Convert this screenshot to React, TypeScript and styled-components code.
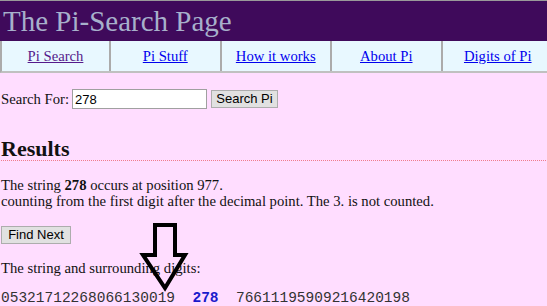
import styled, { createGlobalStyle } from "styled-components";

const GlobalStyle = createGlobalStyle`
  html, body {
    margin: 0;
    padding: 0;
    background: #ffddff;
  }
  body {
    font-family: "Liberation Serif", "Times New Roman", serif;
    font-size: 14.67px;
    color: #111;
  }
`;

const NAV_LINKS = [
  { label: "Pi Search", visited: true },
  { label: "Pi Stuff", visited: false },
  { label: "How it works", visited: false },
  { label: "About Pi", visited: false },
  { label: "Digits of Pi", visited: false },
];

const Page = styled.div`
  position: relative;
  width: 547px;
  height: 306px;
  overflow: hidden;
`;

const Header = styled.header`
  border-top: 1px solid #9a9a9a;
  background: #3f0a5b;
  height: 40px;
  padding-left: 3px;
  display: flex;
  align-items: center;
`;

const Title = styled.h1`
  margin: 0;
  font-weight: normal;
  font-size: 29px;
  line-height: 40px;
  color: #a7b0cb;
`;

const Nav = styled.nav`
  display: grid;
  grid-template-columns: 109px repeat(4, 110.5px);
  width: 553px;
  height: 30px;
  background: #e8f8ff;
  border-left: 2px solid #ababab;
  border-bottom: 2px solid #c0c0c0;
  box-sizing: content-box;
`;

const NavCell = styled.div`
  display: flex;
  align-items: center;
  justify-content: center;
  border-right: 2px solid #ababab;
  &:last-child {
    border-right: none;
  }
`;

const NavLink = styled.a<{ $visited: boolean }>`
  color: ${(p) => (p.$visited ? "#551a8b" : "#0000ee")};
  text-decoration: underline;
  font-size: 14.67px;
`;

const Main = styled.main`
  padding: 0 1px;
`;

const SearchRow = styled.form`
  display: flex;
  align-items: center;
  margin-top: 16px;
  height: 20px;
`;

const Label = styled.label`
  margin-right: 3px;
`;

const SearchInput = styled.input`
  box-sizing: border-box;
  width: 135px;
  height: 20px;
  margin: 0 4px 0 0;
  padding: 1px 2px;
  border: 1px solid #a0a0a0;
  background: #fff;
  font-family: "Liberation Sans", Arial, sans-serif;
  font-size: 13px;
  color: #000;
  outline: none;
`;

const Button = styled.button<{ $w: number }>`
  box-sizing: border-box;
  width: ${(p) => p.$w}px;
  height: 18px;
  padding: 0;
  margin: 0;
  background: #e1e1e1;
  border: 1px solid #adadad;
  font-family: "Liberation Sans", Arial, sans-serif;
  font-size: 13px;
  color: #000;
  line-height: 16px;
`;

const Results = styled.h2`
  margin: 29px 0 0;
  font-size: 22px;
  line-height: 22px;
  font-weight: bold;
  color: #111;
  border-bottom: 1px dotted #f07c8c;
`;

const Paragraph = styled.p<{ $top: number }>`
  margin: ${(p) => p.$top}px 0 0;
  line-height: 16px;
`;

const ButtonRow = styled.div`
  margin-top: 17px;
  height: 18px;
  display: flex;
`;

const Digits = styled.pre`
  margin: 14px 0 0;
  font-family: "Liberation Mono", "Courier New", monospace;
  font-size: 14.5px;
  line-height: 16px;
  color: #333;
`;

const Match = styled.b`
  color: #1a1acc;
`;

const Arrow = styled.svg`
  position: absolute;
  left: 139px;
  top: 222px;
`;

export default function App() {
  return (
    <Page>
      <GlobalStyle />
      <Header>
        <Title>The Pi-Search Page</Title>
      </Header>
      <Nav>
        {NAV_LINKS.map((l) => (
          <NavCell key={l.label}>
            <NavLink href="#" $visited={l.visited}>
              {l.label}
            </NavLink>
          </NavCell>
        ))}
      </Nav>
      <Main>
        <SearchRow onSubmit={(e) => e.preventDefault()}>
          <Label>Search For:</Label>
          <SearchInput defaultValue="278" />
          <Button type="submit" $w={67}>
            Search Pi
          </Button>
        </SearchRow>
        <Results>Results</Results>
        <Paragraph $top={16}>
          The string <b>278</b> occurs at position 977.
          <br />
          counting from the first digit after the decimal point. The 3. is not counted.
        </Paragraph>
        <ButtonRow>
          <Button type="button" $w={70}>
            Find Next
          </Button>
        </ButtonRow>
        <Paragraph $top={16}>The string and surrounding digits:</Paragraph>
        <Digits>
          05321712268066130019  <Match>278</Match>  76611195909216420198
        </Digits>
      </Main>
      <Arrow width="50" height="70" viewBox="0 0 50 70">
        <polygon
          points="16,3 36,3 36,33 46,33 26,66 4,33 16,33"
          fill="none"
          stroke="#000"
          strokeWidth="4"
          strokeLinejoin="miter"
        />
      </Arrow>
    </Page>
  );
}
